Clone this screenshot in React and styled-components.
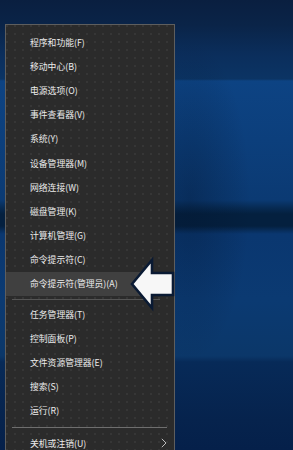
import React from "react";
import styled, { createGlobalStyle } from "styled-components";

const Global = createGlobalStyle`
  html, body { margin: 0; padding: 0; width: 293px; height: 450px; overflow: hidden; }
  body {
    font-family: "Noto Sans CJK SC", "Microsoft YaHei", sans-serif;
    background:
      radial-gradient(ellipse 60px 160px at 190px 200px, rgba(3,20,45,0.35), rgba(3,20,45,0) 100%),
      linear-gradient(180deg,
        #0a1f40 0px, #0a2448 25px, #0b2e5c 55px, #0b3464 79px,
        #0d4383 81px, #0c3f7c 140px, #0b3a73 200px,
        #072a52 208px, #04203f 214px, #04203f 226px, #0a3770 234px,
        #0b3a72 300px, #0b3769 356px, #072a58 362px, #06234d 420px, #05204a 450px);
  }
`;

const Desktop = styled.div`
  position: relative;
  width: 293px;
  height: 450px;
  padding: 24px 0 0 5px;
  box-sizing: border-box;
`;

const Menu = styled.div`
  position: relative;
  width: 170px;
  height: 440px;
  box-sizing: border-box;
  border: 1px solid #5e5e5e;
  background-color: #2b2b2b;
  background-image: radial-gradient(circle at 1px 1px, #3b3b3b 0.6px, transparent 1px);
  background-size: 8px 8px;
  padding-top: 5px;
  display: flex;
  flex-direction: column;
`;

const Item = styled.div`
  height: 24.2px;
  flex: 0 0 24.2px;
  display: flex;
  align-items: center;
  justify-content: space-between;
  padding: 0 7px 0 24px;
  font-size: 8.8px;
  color: #ececec;
  white-space: nowrap;
  background: ${(p) => (p.$active ? "#404040" : "transparent")};
`;

const Sep = styled.div`
  flex: 0 0 ${(p) => p.$h}px;
  display: flex;
  align-items: center;
  padding: 0 6px;
  &::after {
    content: "";
    display: block;
    width: ${(p) => p.$w}px;
    height: 1px;
    background: ${(p) => p.$c};
  }
`;

const ArrowSvg = styled.svg`
  position: absolute;
  left: 127px;
  top: 256px;
  width: 50px;
  height: 56px;
`;

const Chevron = () => (
  <svg width="6" height="10" viewBox="0 0 6 10">
    <path d="M0.8 0.8 L5 5 L0.8 9.2" fill="none" stroke="#bdbdbd" strokeWidth="1" />
  </svg>
);

const groupA = [
  "程序和功能(F)",
  "移动中心(B)",
  "电源选项(O)",
  "事件查看器(V)",
  "系统(Y)",
  "设备管理器(M)",
  "网络连接(W)",
  "磁盘管理(K)",
  "计算机管理(G)",
  "命令提示符(C)",
];
const groupB = ["任务管理器(T)", "控制面板(P)", "文件资源管理器(E)", "搜索(S)", "运行(R)"];

export default function App() {
  return (
    <>
      <Global />
      <Desktop>
        <Menu>
          {groupA.map((t) => (
            <Item key={t}>{t}</Item>
          ))}
          <Item $active>命令提示符(管理员)(A)</Item>
          <Sep $h={6} $w={148} $c="#555555" />
          {groupB.map((t) => (
            <Item key={t}>{t}</Item>
          ))}
          <Sep $h={8} $w={155} $c="#6e6e6e" />
          <Item>
            <span>关机或注销(U)</span>
            <Chevron />
          </Item>
        </Menu>
        <ArrowSvg viewBox="0 0 50 56">
          <polygon
            points="5,28 25,4 25,17 46,17 46,39 25,39 25,52"
            fill="#f7f7f7"
            stroke="#0a1a33"
            strokeWidth="2.6"
            strokeLinejoin="miter"
          />
        </ArrowSvg>
      </Desktop>
    </>
  );
}
